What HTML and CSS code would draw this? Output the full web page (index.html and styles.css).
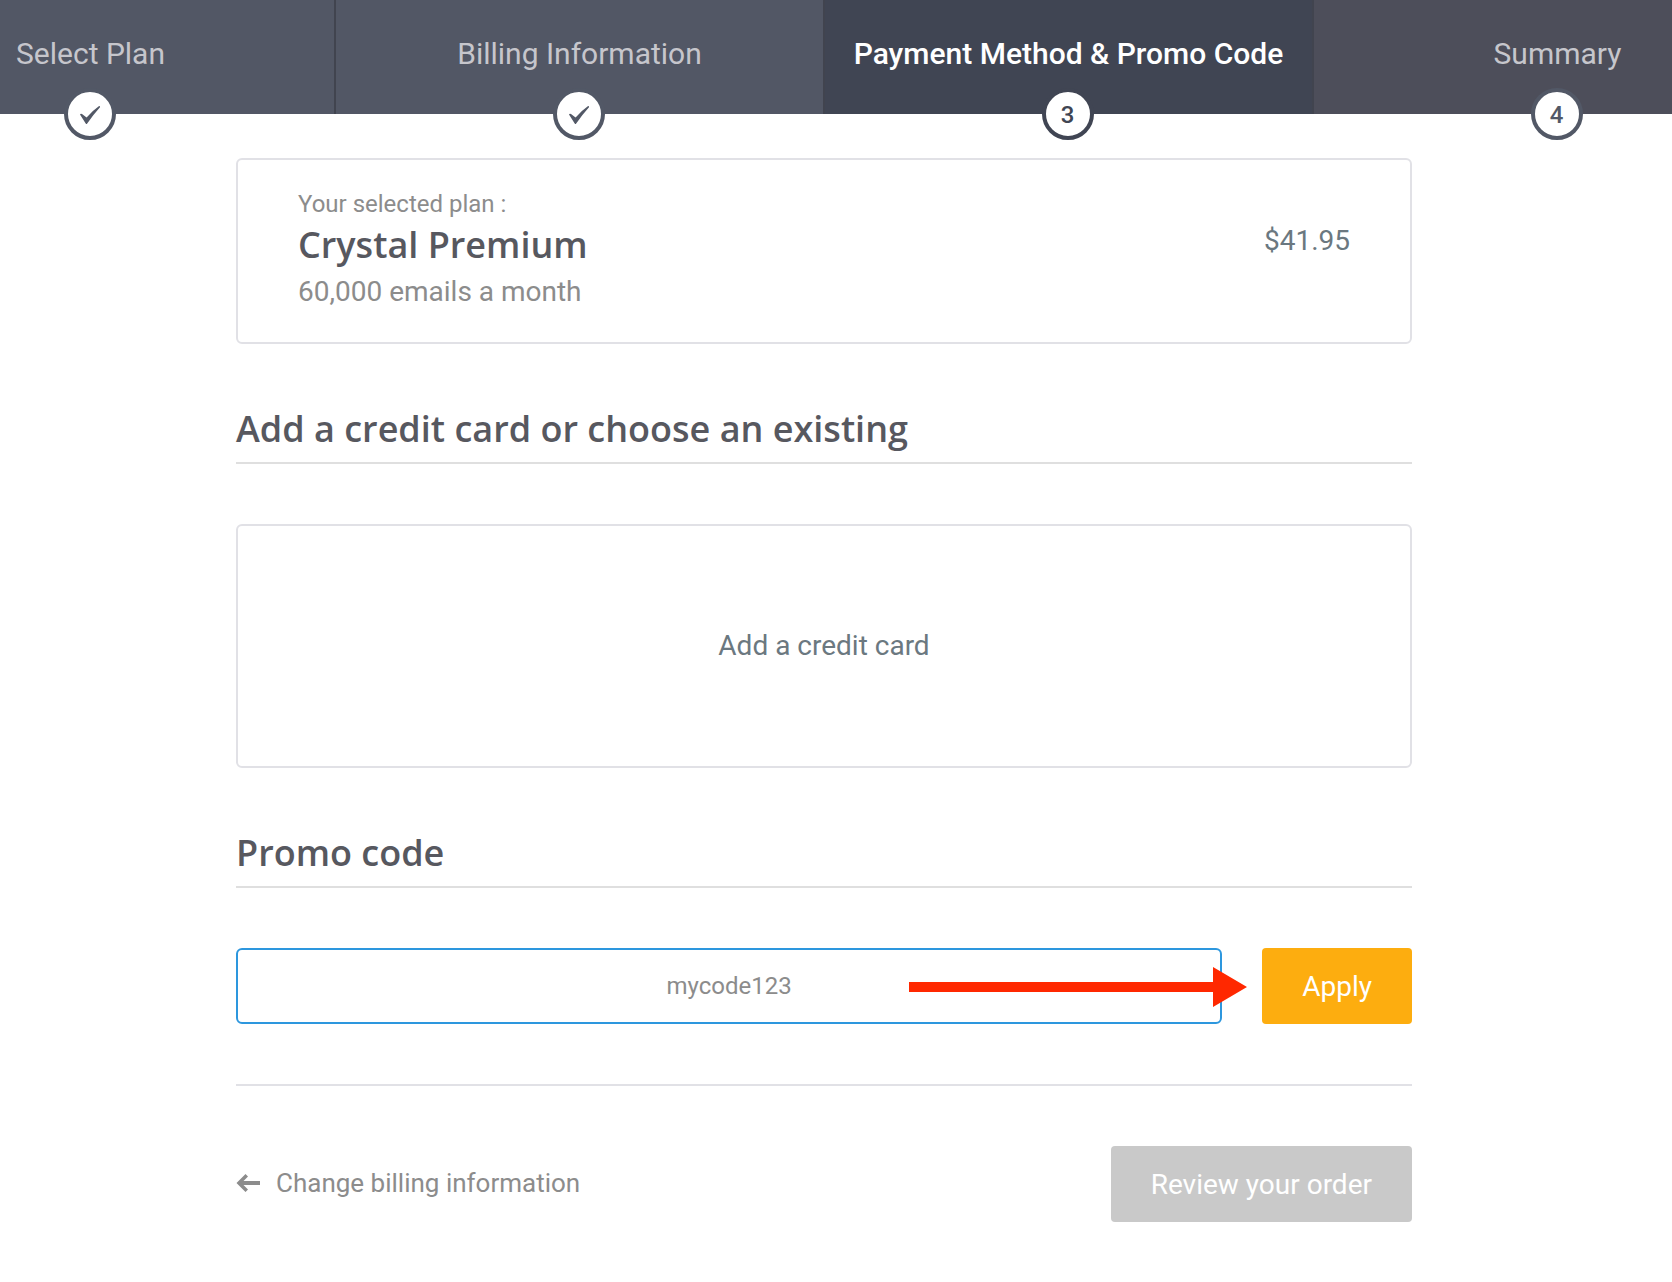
FILE: index.html
```html
<!DOCTYPE html>
<html lang="en">
<head>
    <meta charset="UTF-8">
    <meta name="viewport" content="width=device-width, initial-scale=1.0">
    <title>Payment Method &amp; Promo Code</title>
    <link rel="stylesheet" href="styles.css">
</head>
<body>
    <nav class="steps" aria-label="Checkout steps">
        <ol class="steps-list">
            <li class="step done">
                <a href="#plan">Select Plan</a>
                <span class="step-badge">
                    <svg width="22" height="20" viewBox="0 0 22 20" aria-hidden="true"><path d="M1 9.5Q1.600 8.200 3 9L7.600 12.400Q13 6 19.800 1.200Q21.200 .8 21 2.200Q14 10 8.200 18.400Q7.500 19.400 6.700 18.400Z"/></svg>
                </span>
            </li>
            <li class="step done">
                <a href="#billing">Billing Information</a>
                <span class="step-badge">
                    <svg width="22" height="20" viewBox="0 0 22 20" aria-hidden="true"><path d="M1 9.5Q1.600 8.200 3 9L7.600 12.400Q13 6 19.800 1.200Q21.200 .8 21 2.200Q14 10 8.200 18.400Q7.500 19.400 6.700 18.400Z"/></svg>
                </span>
            </li>
            <li class="step current" aria-current="step">
                <a href="#payment">Payment Method &amp; Promo Code</a>
                <span class="step-badge">3</span>
            </li>
            <li class="step upcoming">
                <a href="#summary">Summary</a>
                <span class="step-badge">4</span>
            </li>
        </ol>
    </nav>

    <main class="content">
        <section class="plan">
            <div class="plan-info">
                <p class="plan-label">Your selected plan :</p>
                <h1 class="plan-name">Crystal Premium</h1>
                <p class="plan-volume">60,000 emails a month</p>
            </div>
            <p class="plan-price">$41.95</p>
        </section>

        <section>
            <h2 class="section-title">Add a credit card or choose an existing</h2>
            <button type="button" class="add-card">Add a credit card</button>
        </section>

        <section>
            <h2 class="section-title"><label for="promo">Promo code</label></h2>
            <form class="promo-form">
                <input type="text" id="promo" class="promo-input" value="mycode123">
                <button type="button" class="btn btn-apply">Apply</button>
                <svg class="pointer" width="338" height="40" viewBox="0 0 338 40" aria-hidden="true"><path d="M0 15H304V0L338 20L304 40V25H0Z"/></svg>
            </form>
        </section>

        <footer class="actions">
            <a href="#billing" class="back-link">
                <svg width="24" height="20" viewBox="0 0 24 20" aria-hidden="true"><path d="M.5 10L9.500 1L12 3.500L7.500 8H24V12H7.500L12 16.500L9.500 19Z"/></svg>
                Change billing information
            </a>
            <button type="button" class="btn btn-review" disabled>Review your order</button>
        </footer>
    </main>
</body>
</html>
```
FILE: styles.css
```css
* {
    box-sizing: border-box;
}

body {
    margin: 0;
    background: #fff;
    color: #8c8c8c;
    font-family: Roboto, sans-serif;
    font-size: 28px;
    overflow-x: hidden;
}

h1, h2, p, ol {
    margin: 0;
    padding: 0;
}

button, input {
    font-family: inherit;
    font-size: inherit;
}

/* step bar */
.steps {
    padding-right: 22px;
    background: #4d4e5a;
}

.steps-list {
    display: flex;
    justify-content: center;
    list-style: none;
}

.step {
    position: relative;
    flex: 1 0 489px;
    height: 114px;
    padding-top: 34px;
    border-right: 2px solid #41444f;
    font-size: 30px;
    line-height: 40px;
    text-align: center;
}

.step a {
    color: #c6c6cc;
    text-decoration: none;
}

.step.done {
    background: #525765;
}

.step.current {
    background: #404553;
}

.step.current a {
    color: #fff;
    font-weight: 500;
}

.step-badge {
    position: absolute;
    bottom: -26px;
    left: 50%;
    display: flex;
    align-items: center;
    justify-content: center;
    width: 52px;
    height: 52px;
    margin-left: -27px;
    padding-top: 2px;
    border: 4px solid #525866;
    border-radius: 50%;
    background: #fff;
    color: #525866;
    font-size: 24px;
    font-weight: 500;
    line-height: 28px;
}

.step-badge svg {
    fill: #525866;
}

.current .step-badge {
    border-color: #404553;
    color: #404553;
}

/* page content */
.content {
    width: calc(100% - 24px);
    max-width: 1648px;
    padding: 44px calc(50% - 600px) 0;
}

.plan {
    display: flex;
    align-items: center;
    justify-content: space-between;
    padding: 28px 60px;
    border: 2px solid #e1e1e6;
    border-radius: 6px;
}

.plan-label {
    font-size: 24px;
    line-height: 32px;
}

.plan-name,
.section-title {
    color: #57585f;
    font-family: "Open Sans", "Noto Sans", sans-serif;
    font-size: 36px;
    font-weight: 600;
    line-height: 50px;
}

.plan-volume {
    line-height: 44px;
}

.plan-price {
    padding-bottom: 22px;
    color: #6b7880;
}

.section-title {
    margin: 60px 0;
    padding-bottom: 8px;
    border-bottom: 2px solid #dfdfdf;
}

.add-card {
    display: block;
    width: 100%;
    padding: 100px 20px;
    border: 2px solid #e1e1e6;
    border-radius: 6px;
    background: #fff;
    color: #6b7880;
    line-height: 40px;
}

.promo-form {
    position: relative;
    display: flex;
    gap: 40px;
}

.promo-input {
    flex: 1;
    min-width: 0;
    height: 76px;
    border: 2px solid #2d97de;
    border-radius: 6px;
    background: #fff;
    color: #8c8c8c;
    font-size: 24px;
    text-align: center;
    outline: none;
}

.btn {
    height: 76px;
    padding: 0 40px;
    border: none;
    border-radius: 4px;
    color: #fff;
}

.btn-apply {
    background: #fdad0f;
}

.btn-review {
    background: #c9c9c9;
}

/* arrow drawn over the field, towards the button */
.pointer {
    position: absolute;
    top: 19px;
    right: 165px;
    fill: #ff2800;
}

.actions {
    display: flex;
    align-items: center;
    justify-content: space-between;
    margin-top: 60px;
    padding: 60px 0;
    border-top: 2px solid #e1e1e6;
}

.back-link {
    display: flex;
    align-items: center;
    gap: 16px;
    padding-bottom: 2px;
    color: #8c8c8c;
    font-size: 26px;
    text-decoration: none;
}

.back-link svg {
    fill: #8c8c8c;
}
```
